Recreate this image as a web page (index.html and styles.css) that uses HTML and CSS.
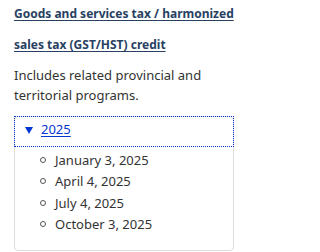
FILE: index.html
```html
<!DOCTYPE html>
<html lang="en">
<head>
<meta charset="utf-8">
<link rel="stylesheet" href="styles.css">
</head>
<body>
<div class="card">
  <h3 class="title"><a href="#">Goods and services tax / harmonized sales tax (GST/HST) credit</a></h3>
  <p class="desc">Includes related provincial and territorial programs.</p>
  <details class="year" open>
    <summary class="year-summary"><span class="tri"></span><span class="year-label">2025</span></summary>
    <ul class="dates">
      <li>January 3, 2025</li>
      <li>April 4, 2025</li>
      <li>July 4, 2025</li>
      <li>October 3, 2025</li>
    </ul>
  </details>
</div>
</body>
</html>
```
FILE: styles.css
```css
html, body {
  margin: 0;
  padding: 0;
  background: #fff;
}
body {
  font-family: "Noto Sans", "Liberation Sans", sans-serif;
  color: #333;
}
.card {
  width: 220px;
  padding: 0 0 0 14px;
}
.title {
  margin: -2px 0 0;
  font-size: 12px;
  font-weight: 700;
  line-height: 31px;
}
.title a {
  color: #284162;
  text-decoration: underline;
  text-underline-offset: 2px;
}
.desc {
  margin: 6px 0 11px;
  font-size: 13px;
  line-height: 19.5px;
  color: #333;
}
.year {
  border: 1px solid #ddd;
  border-radius: 4px;
  padding-bottom: 15px;
}
.year-summary {
  list-style: none;
  display: flex;
  align-items: center;
  box-sizing: border-box;
  height: 29px;
  padding: 0 0 4px 10px;
  outline: 1px dotted #0535d2;
  font-size: 13px;
  line-height: 19.5px;
  color: #0535d2;
  cursor: pointer;
}
.year-summary::-webkit-details-marker { display: none; }
.year-summary::marker { content: ""; }
.tri {
  width: 0;
  height: 0;
  border-left: 4px solid transparent;
  border-right: 4px solid transparent;
  border-top: 7px solid #0535d2;
  margin: 1px 8px 0 0;
}
.year-label {
  text-decoration: underline;
  text-underline-offset: 2px;
}
.dates {
  margin: 4px 0 0;
  padding-left: 40px;
  list-style: none;
  font-size: 13px;
  line-height: 21.3px;
  color: #333;
}
.dates li::before {
  content: "";
  display: inline-block;
  box-sizing: border-box;
  width: 6px;
  height: 6px;
  border: 1.2px solid #555;
  border-radius: 50%;
  margin: 0 9px 0 -15px;
  vertical-align: 2px;
}
```
